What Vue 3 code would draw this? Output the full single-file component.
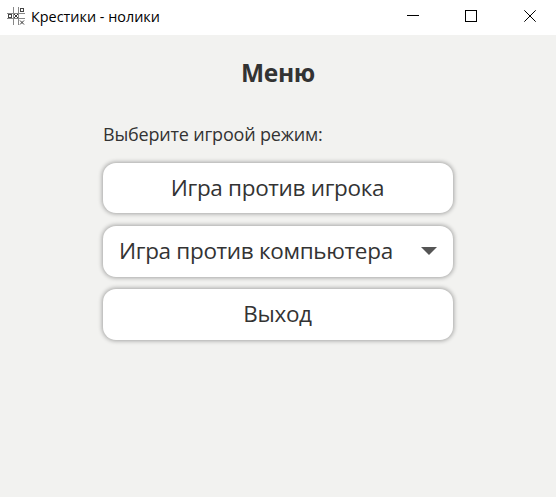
<script setup>
const title = 'Крестики - нолики'
</script>

<template>
  <div class="window">
    <header class="titlebar">
      <svg class="logo" width="18" height="18" viewBox="0 0 18 18" fill="none">
        <path d="M6.5 0v18M11.5 0v18M0 6.5h18M0 11.5h18" stroke="#888" />
        <rect x="13.5" y="1.5" width="3" height="3" stroke="#444" />
        <rect x="1.5" y="7.5" width="3" height="3" stroke="#444" />
        <path d="M7 7l4 4M11 7l-4 4M13 13.500l4 4M17 13.500l-4 4" stroke="#333" />
      </svg>
      <span class="caption">{{ title }}</span>
      <div class="controls">
        <svg width="12" height="12" viewBox="0 0 12 12"><path d="M0 5.5h12" stroke="#000" /></svg>
        <svg width="12" height="12" viewBox="0 0 12 12"><rect x=".5" y=".5" width="11" height="11" fill="none" stroke="#000" /></svg>
        <svg class="close" width="12" height="12" viewBox="0 0 12 12"><path d="M.3.3l11.400 11.400M11.700.3L.3 11.700" stroke="#000" /></svg>
      </div>
    </header>
    <main class="menu">
      <h1>Меню</h1>
      <p>Выберите игроой режим:</p>
      <button class="item first">Игра против игрока</button>
      <button class="item select">
        <span>Игра против компьютера</span>
        <svg width="16" height="8" viewBox="0 0 16 8"><path d="M0 0h16L8 8z" fill="#555" /></svg>
      </button>
      <button class="item">Выход</button>
    </main>
  </div>
</template>

<style>
body { margin: 0; overflow: hidden; }
</style>

<style scoped>
.window {
  width: 556px;
  height: 497px;
  background: #f2f2f0;
  color: #333;
  font-family: "Open Sans", "Noto Sans", sans-serif;
}
.titlebar {
  display: flex;
  align-items: center;
  box-sizing: border-box;
  height: 35px;
  padding: 0 20px 3px 7px;
  background: #fff;
}
.caption {
  margin-left: 6px;
  color: #000;
  font-size: 14.4px;
  white-space: nowrap;
}
.controls { display: flex; gap: 46px; margin-left: auto; }
.close { margin-left: 1px; }
svg { display: block; flex: none; }
.menu {
  display: flex;
  flex-direction: column;
  width: 350px;
  margin: 0 auto;
}
h1 {
  margin: 21px 0 0;
  height: 34px;
  font-size: 24.5px;
  letter-spacing: -0.3px;
  line-height: 34px;
  text-align: center;
}
p {
  margin: 31px 0 0;
  height: 27px;
  font-size: 18px;
  letter-spacing: -0.19px;
  line-height: 26px;
  white-space: nowrap;
}
.item {
  display: flex;
  align-items: center;
  justify-content: center;
  box-sizing: border-box;
  height: 51px;
  margin: 12px 0 0;
  padding: 0 1px 2px 0;
  border: 0;
  border-radius: 13px;
  background: #fff;
  box-shadow: 0 0 4px 1px rgba(0, 0, 0, 0.32);
  color: #333;
  font-family: inherit;
  font-size: 22.5px;
  letter-spacing: -0.32px;
  line-height: 30px;
  white-space: nowrap;
}
.first { height: 50px; margin-top: 15px; padding-bottom: 1px; }
.item.select { margin-top: 13px; justify-content: space-between; padding: 0 16px 2px; }
</style>
